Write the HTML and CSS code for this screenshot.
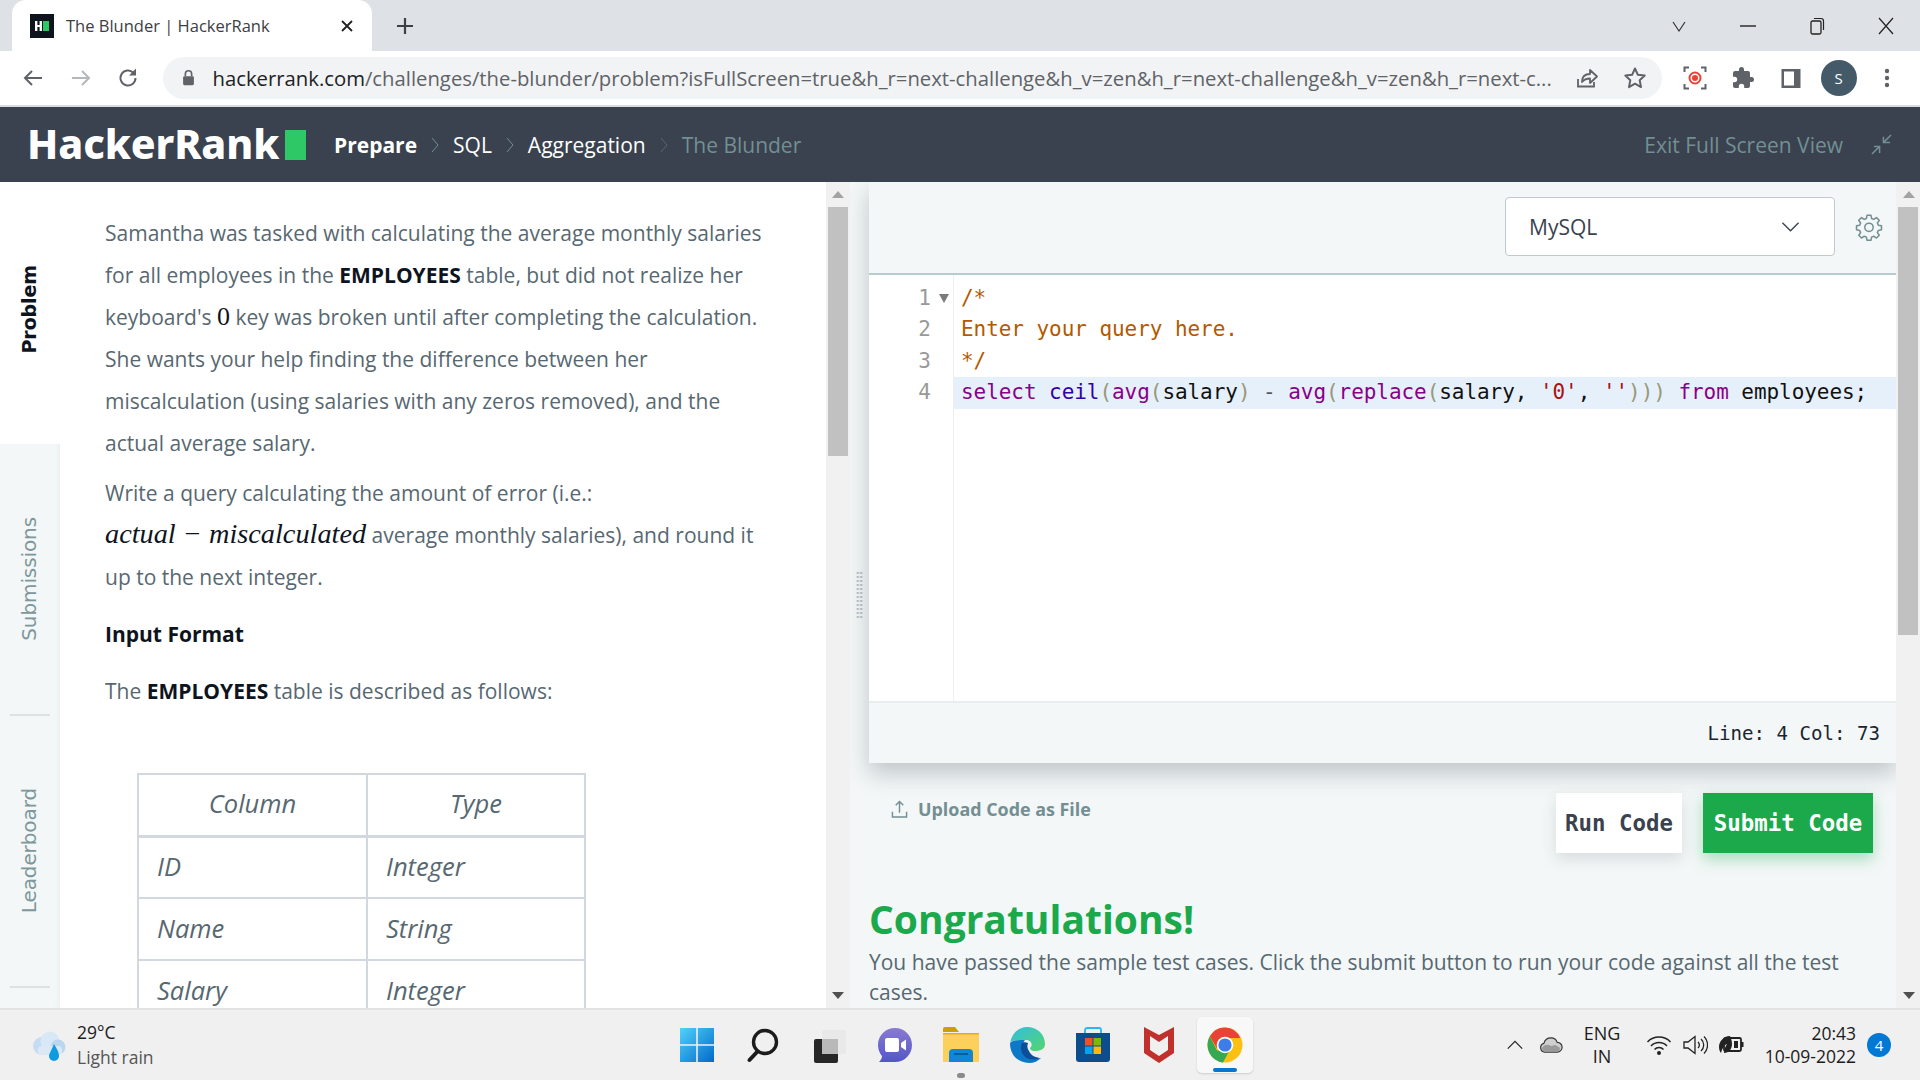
FILE: index.html
```html
<!DOCTYPE html>
<html lang="en">
<head>
<meta charset="utf-8">
<title>The Blunder | HackerRank</title>
<link rel="stylesheet" href="styles.css">
</head>
<body>
<div class="screen">
  <div class="tabstrip">
    <div class="tab">
      <svg class="favicon" viewBox="0 0 24 24"><rect width="24" height="24" fill="#0e141e"/><path d="M5 7h2.400v4h2.200V7H12v10H9.600v-4H7.400v4H5z" fill="#fff"/><rect x="13" y="7" width="6" height="10" fill="#2ec866"/></svg>
      <span class="tab-title">The Blunder | HackerRank</span>
      <svg class="tab-close" viewBox="0 0 14 14"><path d="M2 2l10 10M12 2L2 12" stroke="#202124" stroke-width="1.800" fill="none"/></svg>
    </div>
    <svg class="newtab" viewBox="0 0 20 20"><path d="M10 2v16M2 10h16" stroke="#3c4043" stroke-width="2.200" fill="none"/></svg>
    <div class="winctl">
      <svg viewBox="0 0 20 20"><path d="M4 6l6 9 6-9" stroke="#333" stroke-width="1.200" fill="none"/></svg>
      <svg viewBox="0 0 20 20"><path d="M2 10h16" stroke="#222" stroke-width="1.400" fill="none"/></svg>
      <svg viewBox="0 0 20 20"><rect x="4" y="5" width="10" height="13" rx="1.500" stroke="#222" stroke-width="1.300" fill="none"/><path d="M7 2.500h7a2.500 2.500 0 0 1 2.500 2.500v9" stroke="#222" stroke-width="1.200" fill="none"/></svg>
      <svg viewBox="0 0 20 20"><path d="M3 2l14 16M17 2L3 18" stroke="#222" stroke-width="1.200" fill="none"/></svg>
    </div>
  </div>

  <div class="toolbar">
    <svg class="tbi" viewBox="0 0 24 24"><path d="M21 12H4M11 5l-7 7 7 7" stroke="#5f6368" stroke-width="2" fill="none"/></svg>
    <svg class="tbi" viewBox="0 0 24 24"><path d="M3 12h17M13 5l7 7-7 7" stroke="#b4b7bb" stroke-width="2" fill="none"/></svg>
    <svg class="tbi tbi-last" viewBox="0 0 24 24"><path d="M19.500 12a7.500 7.500 0 1 1-2.200-5.300" stroke="#5f6368" stroke-width="2" fill="none"/><path d="M20 2.500v7h-7z" fill="#5f6368"/></svg>
    <div class="omnibox">
      <svg class="lock" viewBox="0 0 16 20"><path d="M4.500 8V5.500a3.500 3.500 0 0 1 7 0V8" stroke="#5f6368" stroke-width="1.800" fill="none"/><rect x="2" y="8" width="12" height="10" rx="1.500" fill="#5f6368"/></svg>
      <span class="url"><span class="domain">hackerrank.com</span>/challenges/the-blunder/problem?isFullScreen=true&amp;h_r=next-challenge&amp;h_v=zen&amp;h_r=next-challenge&amp;h_v=zen&amp;h_r=next-c...</span>
      <svg class="omi" viewBox="0 0 24 24"><path d="M3 13v7.500h16V16" stroke="#5f6368" stroke-width="1.800" fill="none"/><path d="M7 16c0-5 3-8 8-8V4l7 6.500-7 6.500v-4.500c-4 0-6 1-8 3.500z" stroke="#5f6368" stroke-width="1.800" fill="none" stroke-linejoin="round"/></svg>
      <svg class="omi" viewBox="0 0 24 24"><path d="M12 2.500l2.900 6.300 6.800.8-5 4.700 1.300 6.800-6-3.400-6 3.400 1.300-6.800-5-4.700 6.800-.8z" stroke="#5f6368" stroke-width="2" fill="none" stroke-linejoin="round"/></svg>
    </div>
    <div class="ext">
      <svg class="tbi" viewBox="0 0 24 24"><path d="M6 1.500H1.500V6M18 1.500h4.500V6M6 22.500H1.500V18M18 22.500h4.500V18" stroke="#5f6368" stroke-width="2" fill="none"/><circle cx="12" cy="12" r="5.500" fill="none" stroke="#ea4335" stroke-width="2"/><circle cx="12" cy="12" r="3" fill="#ea4335"/></svg>
      <svg class="tbi" viewBox="0 0 24 24"><path d="M20.500 11H19V7a2 2 0 0 0-2-2h-4V3.500a2.500 2.500 0 0 0-5 0V5H4a2 2 0 0 0-2 2v3.800h1.500a2.700 2.700 0 0 1 0 5.400H2V20a2 2 0 0 0 2 2h3.800v-1.500a2.700 2.700 0 0 1 5.400 0V22H17a2 2 0 0 0 2-2v-4h1.500a2.500 2.500 0 0 0 0-5z" fill="#5f6368"/></svg>
      <svg class="tbi" viewBox="0 0 24 24"><rect x="2.500" y="3" width="19" height="19" fill="#5f6368"/><rect x="5" y="5.500" width="10" height="14" fill="#fff"/></svg>
      <span class="avatar">S</span>
      <svg class="tbi" viewBox="0 0 24 24"><circle cx="12" cy="5" r="2.200" fill="#5f6368"/><circle cx="12" cy="12" r="2.200" fill="#5f6368"/><circle cx="12" cy="19" r="2.200" fill="#5f6368"/></svg>
    </div>
  </div>

  <header class="navbar">
    <div class="logo"><span>HackerRank</span><i class="logo-block"></i></div>
    <nav class="crumbs">
      <b>Prepare</b>
      <svg class="crumb-sep" viewBox="0 0 10 20"><path d="M2 3l6 7-6 7" stroke="#738f93" fill="none"/></svg>
      <span>SQL</span>
      <svg class="crumb-sep" viewBox="0 0 10 20"><path d="M2 3l6 7-6 7" stroke="#738f93" fill="none"/></svg>
      <span>Aggregation</span>
      <svg class="crumb-sep" viewBox="0 0 10 20"><path d="M2 3l6 7-6 7" stroke="#576871" fill="none"/></svg>
      <span class="crumb-muted">The Blunder</span>
    </nav>
    <div class="exit">
      <span>Exit Full Screen View</span>
      <svg class="exit-icon" viewBox="0 0 22 22"><path d="M21 1l-8 8M13 3v6h7M1 21l8-8M3 13h6v7" stroke="#738f93" stroke-width="1.600" fill="none"/></svg>
    </div>
  </header>

  <main class="workspace">
    <aside class="sidetabs">
      <div class="stab stab-active"><span>Problem</span></div>
      <div class="stab"><span>Submissions</span></div>
      <div class="stab"><span>Leaderboard</span></div>
    </aside>

    <section class="problem">
      <p>Samantha was tasked with calculating the average monthly salaries for all employees in the <strong>EMPLOYEES</strong> table, but did not realize her keyboard's <span class="num">0</span> key was broken until after completing the calculation. She wants your help finding the difference between her miscalculation (using salaries with any zeros removed), and the actual average salary.</p>
      <p>Write a query calculating the amount of error (i.e.: <span class="math">actual &minus; miscalculated</span> average monthly salaries), and round it up to the next integer.</p>
      <h4>Input Format</h4>
      <p class="desc">The <strong>EMPLOYEES</strong> table is described as follows:</p>
      <table class="schema">
        <thead><tr><th>Column</th><th>Type</th></tr></thead>
        <tbody>
          <tr><td>ID</td><td>Integer</td></tr>
          <tr><td>Name</td><td>String</td></tr>
          <tr><td>Salary</td><td>Integer</td></tr>
        </tbody>
      </table>
    </section>

    <div class="scrollbar">
      <i class="arrow-up"></i>
      <div class="track"><div class="thumb thumb-left"></div></div>
      <i class="arrow-down"></i>
    </div>

    <div class="splitter"><i class="grip"></i></div>

    <section class="editor-col">
      <div class="card">
        <div class="card-head">
          <div class="select"><span>MySQL</span>
            <svg class="select-chev" viewBox="0 0 20 12"><path d="M1.500 1.500L10 10l8.500-8.500" stroke="#39424e" stroke-width="1.400" fill="none"/></svg>
          </div>
          <svg class="gear" viewBox="0 0 24 24"><path d="M10.300 2h3.400l.5 2.700 1.900.8 2.300-1.600 2.400 2.400-1.600 2.300.8 1.900 2.700.5v3.400l-2.700.5-.8 1.900 1.600 2.300-2.400 2.400-2.300-1.600-1.900.8-.5 2.700h-3.400l-.5-2.700-1.900-.8-2.300 1.600-2.400-2.400 1.600-2.300-.8-1.900-2.700-.5v-3.400l2.700-.5.8-1.900-1.600-2.300 2.400-2.400 2.300 1.600 1.900-.8z" stroke="#738f93" stroke-width="1.300" fill="none" stroke-linejoin="round"/><circle cx="12" cy="12.300" r="3.600" stroke="#738f93" stroke-width="1.300" fill="none"/></svg>
        </div>
        <div class="code">
          <div class="gutter">
            <div class="ln">1<i class="fold"></i></div>
            <div class="ln">2</div>
            <div class="ln">3</div>
            <div class="ln">4</div>
          </div>
          <div class="lines">
            <div class="line c">/*</div>
            <div class="line c">Enter your query here.</div>
            <div class="line c">*/</div>
            <div class="line active"><span class="k">select</span> <span class="b">ceil</span><span class="p">(</span><span class="k">avg</span><span class="p">(</span>salary<span class="p">)</span> <span class="o">-</span> <span class="k">avg</span><span class="p">(</span><span class="k">replace</span><span class="p">(</span>salary, <span class="s">'0'</span>, <span class="s">''</span><span class="p">)))</span> <span class="k">from</span> employees;</div>
          </div>
        </div>
        <div class="card-foot">Line: 4 Col: 73</div>
      </div>

      <div class="actions">
        <a class="upload">
          <svg class="upload-icon" viewBox="0 0 18 20"><path d="M9 14V2M5 6l4-4 4 4M1.500 13v5.500h15V13" stroke="#738f93" stroke-width="1.500" fill="none"/></svg>
          Upload Code as File
        </a>
        <button class="btn btn-run">Run Code</button>
        <button class="btn btn-submit">Submit Code</button>
      </div>

      <h2 class="congrats">Congratulations!</h2>
      <p class="passed">You have passed the sample test cases. Click the submit button to run your code against all the test cases.</p>
    </section>

    <div class="scrollbar">
      <i class="arrow-up"></i>
      <div class="track"><div class="thumb thumb-right"></div></div>
      <i class="arrow-down"></i>
    </div>
  </main>

  <footer class="taskbar">
    <div class="weather">
      <svg class="weather-icon" viewBox="0 0 36 32"><circle cx="12" cy="15" r="9" fill="#c6dcf2"/><circle cx="20" cy="10" r="9.500" fill="#d9e8f6"/><circle cx="28" cy="16" r="7.500" fill="#bcd6ef"/><rect x="8" y="15" width="24" height="9" rx="4" fill="#dbe9f7"/><path d="M24 13c3 5 5 8 5 12a5 5 0 0 1-10 0c0-2 3-7 5-12z" fill="#0e9be0"/></svg>
      <div class="weather-text"><span>29°C</span><span class="weather-sub">Light rain</span></div>
    </div>

    <div class="apps">
      <div class="app">
        <svg class="app-i" viewBox="0 0 36 36"><defs><linearGradient id="win" x1="0" y1="0" x2="1" y2="1"><stop offset="0" stop-color="#4fd2fb"/><stop offset="1" stop-color="#0469c8"/></linearGradient></defs><path d="M1 1h16.200v16.200H1zM18.800 1H35v16.200H18.800zM1 18.800h16.200V35H1zM18.800 18.800H35V35H18.800z" fill="url(#win)"/></svg>
      </div>
      <div class="app">
        <svg class="app-i" viewBox="0 0 36 36"><circle cx="20" cy="15" r="11.500" stroke="#1c1c1c" stroke-width="3.400" fill="none"/><path d="M12 25l-7.500 8" stroke="#1c1c1c" stroke-width="4" stroke-linecap="round"/></svg>
      </div>
      <div class="app">
        <svg class="app-i" viewBox="0 0 36 36"><rect x="3" y="12" width="24" height="24" rx="2" fill="#272727"/><rect x="11" y="3" width="24" height="24" rx="2" fill="#e8e8e8" fill-opacity=".85"/><rect x="11" y="12" width="16" height="15" fill="#b9b9b9"/></svg>
      </div>
      <div class="app">
        <svg class="app-i" viewBox="0 0 36 36"><defs><linearGradient id="chat" x1="0" y1="0" x2="0" y2="1"><stop offset="0" stop-color="#8a7ad0"/><stop offset="1" stop-color="#5257c7"/></linearGradient></defs><path d="M18 1c9.500 0 17 7.500 17 17s-7.500 17-17 17H2c2-2 3-4 3-6C2.500 26 1 22.500 1 18 1 8.500 8.500 1 18 1z" fill="url(#chat)"/><rect x="8" y="11" width="14" height="14" rx="2" fill="#fff"/><path d="M24 16l5-3.500v11L24 20z" fill="#fff"/></svg>
      </div>
      <div class="app">
        <svg class="app-i" viewBox="0 0 36 36"><path d="M0 2a2 2 0 0 1 2-2h10l4 5H0z" fill="#d49a08"/><path d="M0 6h36v29H0z" fill="#fcd05a"/><path d="M0 6h36v1.500H0z" fill="#e5ab1d"/><path d="M6 35V26a4 4 0 0 1 4-4h16a4 4 0 0 1 4 4v9z" fill="#0f87d6"/><path d="M11 27h14" stroke="#075a9c" stroke-width="2"/></svg>
      </div>
      <div class="app">
        <svg class="app-i" viewBox="0 0 36 36"><defs><linearGradient id="edge" x1="0" y1="0" x2="1" y2="1"><stop offset="0" stop-color="#33bde2"/><stop offset="1" stop-color="#52d66d"/></linearGradient></defs><path d="M1 16C3 6 10 0 18 0c10 0 18 7 18 17 0 6-6 7-10 7-4 0-5-2-5-3 3-2 2-8-4-8-6 0-16 0-16 3z" fill="url(#edge)"/><path d="M1 16c0 12 8 20 19 20 5 0 9-2 12-5-5 2-10 1-13-1-6-3-7-12-3-17-7 0-13 0-15 3z" fill="#0d78c8"/><path d="M13 16c-3 7 1 14 7 16 5 1 9 0 12-1-4 0-10-2-12-7-2-3-2-5-1-8-2-1-5-1-6 0z" fill="#0b4f9a"/></svg>
      </div>
      <div class="app">
        <svg class="app-i" viewBox="0 0 36 36"><path d="M10 7V3a2 2 0 0 1 2-2h12a2 2 0 0 1 2 2v4" stroke="#2ab6f0" stroke-width="1.800" fill="none"/><path d="M1 6h34v26a3 3 0 0 1-3 3H4a3 3 0 0 1-3-3z" fill="#0e4d8c"/><rect x="10" y="11" width="7.500" height="7.500" fill="#f25022"/><rect x="18.500" y="11" width="7.500" height="7.500" fill="#7fba00"/><rect x="10" y="19.500" width="7.500" height="7.500" fill="#00a4ef"/><rect x="18.500" y="19.500" width="7.500" height="7.500" fill="#ffb900"/></svg>
      </div>
      <div class="app">
        <svg class="app-i" viewBox="0 0 36 36"><path d="M3 0l15 8 15-8v26l-15 10L3 26zM9 9v14l9 6 9-6V9l-9 6z" fill="#c0302c" fill-rule="evenodd"/></svg>
      </div>
      <div class="app app-on">
        <svg class="app-i" viewBox="0 0 36 36"><circle cx="18" cy="18" r="17.500" fill="#fbc012"/><path d="M18 .500A17.500 17.500 0 0 0 2.800 9.300L10 21.500 18 11h15.300A17.500 17.500 0 0 0 18 .500z" fill="#ea4335"/><path d="M2.800 9.300A17.500 17.500 0 0 0 16 35.400l6-10.900-12 -1z" fill="#34a853"/><circle cx="18" cy="18" r="8.300" fill="#fff"/><circle cx="18" cy="18" r="6.600" fill="#3b7de9"/></svg>
      </div>
    </div>

    <div class="tray">
      <svg class="tray-i caret" viewBox="0 0 20 20"><path d="M2 14l8-8 8 8" stroke="#222" stroke-width="1.300" fill="none"/></svg>
      <svg class="tray-i cloud" viewBox="0 0 26 18"><path d="M6 17a5 5 0 0 1-1-9.800C6 3.500 9 1 13 1c3.500 0 6 2 7 5a5.500 5.500 0 0 1 0 11z" fill="#cfcfcf" stroke="#333" stroke-width="1.300"/><path d="M3 12c4-5 8-3 10-2l5-1 5 3c0 3-1 4-3 4.500H6c-2 0-3-2-3-4.500z" fill="#9a9a9a"/></svg>
      <div class="lang"><span>ENG</span><span>IN</span></div>
      <svg class="tray-i" viewBox="0 0 26 22"><path d="M1.500 8a16 16 0 0 1 23 0M5 12a11 11 0 0 1 16 0M8.500 15.500a6 6 0 0 1 9 0" stroke="#222" stroke-width="1.500" fill="none"/><circle cx="13" cy="19" r="2" fill="#222"/></svg>
      <svg class="tray-i" viewBox="0 0 26 22"><path d="M2 8h4l7-5.500v17L6 14H2z" stroke="#222" stroke-width="1.300" fill="none"/><path d="M16 8a4 4 0 0 1 0 6M19 5a8 8 0 0 1 0 12M22 2.500a12 12 0 0 1 0 17" stroke="#222" stroke-width="1.300" fill="none"/></svg>
      <svg class="tray-i" viewBox="0 0 26 22"><rect x="6" y="4" width="17" height="13" rx="1.500" stroke="#222" stroke-width="1.800" fill="none"/><rect x="23" y="8" width="2.500" height="5" fill="#222"/><path d="M12 2C5 2 1 8 1 13c0 3 1 5 2 6 1-4 3-8 6-9-2 3-3 6-3 9 5 0 8-4 8-9 0-3-1-6-2-8z" fill="#222"/><rect x="16" y="7" width="4" height="7" fill="#222"/></svg>
      <div class="clock"><span>20:43</span><span>10-09-2022</span></div>
      <span class="badge">4</span>
    </div>
  </footer>
</div>
</body>
</html>
```

FILE: styles.css
```css
* { box-sizing: border-box; }
html, body { margin: 0; padding: 0; height: 100%; overflow: hidden; }
body { font-family: "Open Sans", "Noto Sans", sans-serif; color: #576871; background: #fff; }
.screen { width: 1920px; height: 1080px; display: flex; flex-direction: column; overflow: hidden; }

/* browser chrome */
.tabstrip { height: 51px; flex: none; background: #dee1e6; display: flex; align-items: center; padding-left: 12px; }
.tab { width: 360px; height: 51px; background: #fff; border-radius: 14px 14px 0 0; display: flex; align-items: center; padding: 0 18px; }
.favicon { width: 24px; height: 24px; flex: none; }
.tab-title { margin-left: 12px; font-size: 16.500px; color: #3c4043; flex: 1; white-space: nowrap; }
.tab-close { width: 14px; height: 14px; flex: none; }
.newtab { width: 20px; height: 20px; margin-left: 23px; flex: none; }
.winctl { margin-left: auto; display: flex; gap: 49px; padding-right: 24px; }
.winctl svg { width: 20px; height: 20px; display: block; }

.toolbar { height: 56px; flex: none; background: #fff; border-bottom: 2px solid #dadce0; display: flex; align-items: center; padding: 0 0 0 21px; }
.tbi { width: 24px; height: 24px; flex: none; }
.toolbar > .tbi { margin-right: 23.500px; }
.toolbar > .tbi-last { margin-right: 22.500px; }
.omnibox { width: 1499px; height: 42px; background: #f1f3f4; border-radius: 21px; display: flex; align-items: center; padding-left: 18px; flex: none; }
.lock { width: 15px; height: 18px; flex: none; }
.url { margin-left: 17px; width: 1340px; font-size: 20.300px; color: #5f6368; white-space: nowrap; flex: none; }
.domain { color: #202124; }
.omi { width: 24px; height: 24px; flex: none; margin-left: 24px; }
.url + .omi { margin-left: 22px; }
.ext { display: flex; align-items: center; margin-left: 21px; gap: 24px; }
.avatar { width: 36px; height: 36px; border-radius: 50%; background: #455a68; color: #fff; font-size: 15px; display: flex; align-items: center; justify-content: center; margin: 0 -6px; flex: none; }

/* navbar */
.navbar { height: 75px; flex: none; background: #39424e; display: flex; align-items: center; padding: 0 28px; }
.logo { display: flex; align-items: center; color: #fff; font-weight: 800; font-size: 41px; width: 307px; margin-left: -1px; font-family: "Noto Sans", sans-serif; letter-spacing: -.1px; }
.logo span { width: 258px; white-space: nowrap; line-height: 1; margin-top: -2px; }
.logo-block { width: 21px; height: 30px; background: #2ec866; display: block; }
.crumbs { display: flex; align-items: center; font-size: 21px; color: #fff; gap: 10px; }
.crumbs b { font-weight: 700; }
.crumb-sep { width: 10px; height: 20px; margin: 0 3px; }
.crumb-muted { color: #738f93; }
.exit { margin-left: auto; display: flex; align-items: center; font-size: 21px; color: #738f93; gap: 28px; }
.exit-icon { width: 21px; height: 21px; }

/* main */
.workspace { flex: 1; min-height: 0; display: flex; background: #f3f7f7; overflow: hidden; }
.sidetabs { width: 60px; flex: none; display: flex; flex-direction: column; background: #f3f7f7; box-shadow: inset -6px 0 6px -6px #e4e9e9; }
.stab { height: 272px; margin: 0 10px; border-bottom: 2px solid #dde3e3; display: flex; align-items: center; justify-content: center; flex: none; padding-right: 3px; }
.stab span { writing-mode: vertical-rl; transform: rotate(180deg); font-family: "DejaVu Sans", sans-serif; font-size: 20px; color: #7d979b; letter-spacing: -.1px; }
.stab-active { height: 262px; margin: 0; background: #fff; border: 0; padding-bottom: 8px; padding-right: 3px; }
.stab-active span { color: #0e141e; font-weight: 700; font-size: 19px; }

.problem { width: 766px; flex: none; background: #fff; padding: 30px 0 0 45px; overflow: hidden; font-size: 21px; line-height: 42px; color: #576871; }
.problem p { width: 662px; margin: 0 0 8px; }
.problem strong { color: #0e141e; font-weight: 700; }
.num { font-family: "Liberation Serif", serif; font-size: 26px; line-height: 1; color: #0e141e; }
.math { font-family: "Liberation Serif", serif; font-style: italic; font-size: 28.300px; line-height: 1; color: #0e141e; white-space: nowrap; }
.problem h4 { margin: 15px 0; font-size: 21px; line-height: 42px; color: #0e141e; font-weight: 700; }
.problem .desc { margin-bottom: 61px; }
.schema { border-collapse: collapse; margin-left: 32px; width: 449px; table-layout: fixed; font-style: italic; font-size: 25.500px; }
.schema th, .schema td { border: 2px solid #d3d7e0; height: 62px; line-height: 30px; padding: 0 0 3px 18px; font-weight: 400; text-align: left; }
.schema th { text-align: center; padding: 0 0 3px; border-bottom-width: 3px; }
.schema th:first-child, .schema td:first-child { width: 229px; }

.scrollbar { width: 24px; flex: none; background: #f1f1f1; display: flex; flex-direction: column; align-items: center; position: relative; z-index: 2; }
.scrollbar:last-child { width: 25px; }
.track { flex: 1; width: 100%; padding: 0 2px; }
.thumb { width: 20px; background: #c1c1c1; }
.thumb-left { height: 249px; }
.thumb-right { height: 428px; }
.arrow-up, .arrow-down { width: 0; height: 0; border-left: 6px solid transparent; border-right: 6px solid transparent; margin: 9px 0; flex: none; }
.arrow-up { border-bottom: 7px solid #a3a3a3; }
.arrow-down { border-top: 7px solid #505050; }

.splitter { width: 19px; flex: none; display: flex; align-items: center; justify-content: center; }
.grip { width: 7px; height: 48px; display: block; background-image: radial-gradient(circle, #b8c4c4 1.200px, transparent 1.500px); background-size: 3.500px 4px; }

.editor-col { width: 1027px; flex: none; display: flex; flex-direction: column; }
.card { background: #f3f7f7; box-shadow: 0 10px 22px rgba(57,66,78,.28); flex: none; position: relative; z-index: 1; }
.card-head { height: 93px; border-bottom: 2px solid #b7cdcd; display: flex; align-items: flex-start; justify-content: flex-end; padding: 15px 13px 0 0; }
.select { width: 330px; height: 59px; background: #fff; border: 1px solid #c2c7d0; border-radius: 4px; display: flex; align-items: center; justify-content: space-between; padding: 0 34px 0 23px; font-size: 21px; color: #39424e; }
.select-chev { width: 19px; height: 12px; }
.gear { width: 28px; height: 28px; margin: 16px 0 0 20px; flex: none; }

.code { height: 428px; background: #fff; display: flex; font-family: "DejaVu Sans Mono", monospace; font-size: 21px; border-bottom: 2px solid #e9eded; padding-top: 8px; }
.gutter { width: 85px; flex: none; border-right: 1px solid #eeeeee; margin-top: -8px; padding-top: 8px; color: #999; }
.ln { height: 31.400px; line-height: 31.400px; position: relative; padding-right: 22px; text-align: right; }
.fold { position: absolute; right: 4px; top: 11px; width: 0; height: 0; border-left: 5px solid transparent; border-right: 5px solid transparent; border-top: 9px solid #7a7a7a; }
.lines { flex: 1; letter-spacing: -.06px; }
.line { height: 31.400px; line-height: 31.400px; padding-left: 7px; white-space: pre; color: #111; }
.active { background: #e6f0fb; }
.c { color: #b35900; }
.k { color: #808; }
.b { color: #30a; }
.p { color: #997; }
.o { color: #555; }
.s { color: #a11; }

.card-foot { height: 60px; display: flex; align-items: center; justify-content: flex-end; padding-right: 16px; font-family: "DejaVu Sans Mono", monospace; font-size: 19.100px; color: #1c2430; }

.actions { display: flex; align-items: flex-start; margin-top: 30px; padding-right: 23px; flex: none; }
.upload { display: flex; align-items: center; gap: 10px; margin: 3px auto 0 22px; font-size: 17.900px; line-height: 26px; font-weight: 700; color: #738f93; }
.upload-icon { width: 17px; height: 20px; }
.btn { height: 60px; border: 0; font-family: "DejaVu Sans Mono", monospace; font-weight: 700; font-size: 22.400px; padding: 0; }
.btn-run { width: 126px; background: #fff; color: #39424e; box-shadow: 0 6px 14px rgba(57,66,78,.14); margin-right: 21px; }
.btn-submit { width: 170px; background: #1ba94c; color: #fff; box-shadow: 0 6px 14px rgba(27,169,76,.35); }

.congrats { margin: 40px 0 3px; font-size: 39px; line-height: 52px; font-weight: 700; color: #1ba94c; }
.passed { margin: 0; width: 1000px; font-size: 21px; line-height: 29.500px; color: #576871; }

/* taskbar */
.taskbar { height: 72px; flex: none; background: #f0f0f0; border-top: 2px solid #e2e2e2; display: flex; align-items: center; color: #1c1c1c; position: relative; }
.weather { width: 669px; flex: none; display: flex; align-items: center; padding-left: 30px; gap: 11px; }
.weather-icon { width: 36px; height: 32px; margin-top: 4px; }
.weather-text { display: flex; flex-direction: column; font-size: 17.500px; line-height: 25px; }
.weather-sub { color: #555; }
.apps { display: flex; gap: 10px; flex: none; }
.app { width: 56px; height: 56px; display: flex; align-items: center; justify-content: center; flex: none; border-radius: 5px; position: relative; }
.app-i { width: 36px; height: 36px; display: block; }
.app:nth-child(5)::after { content: ""; position: absolute; left: 24px; bottom: -5px; width: 8px; height: 5px; border-radius: 3px; background: #8a8a8a; }
.app-on { background: #f8f8f8; box-shadow: 0 1px 2px rgba(0,0,0,.15); }
.app-on::after { content: ""; position: absolute; left: 16px; bottom: 1px; width: 24px; height: 4px; border-radius: 2px; background: #0078d4; }
.tray { margin-left: auto; display: flex; align-items: center; padding-right: 29px; }
.tray-i { width: 26px; height: 22px; flex: none; margin-right: 10px; }
.caret { width: 18px; height: 18px; margin-right: 15px; }
.cloud { width: 24px; height: 16px; margin-right: 13px; }
.lang { width: 52px; margin-right: 18px; display: flex; flex-direction: column; align-items: center; font-size: 18px; line-height: 23px; }
.clock { width: 102px; display: flex; flex-direction: column; align-items: flex-end; font-size: 17.500px; line-height: 23px; }
.badge { width: 24px; height: 24px; margin-left: 11px; border-radius: 50%; background: #0078d4; color: #fff; font-size: 15px; display: flex; align-items: center; justify-content: center; }
```
